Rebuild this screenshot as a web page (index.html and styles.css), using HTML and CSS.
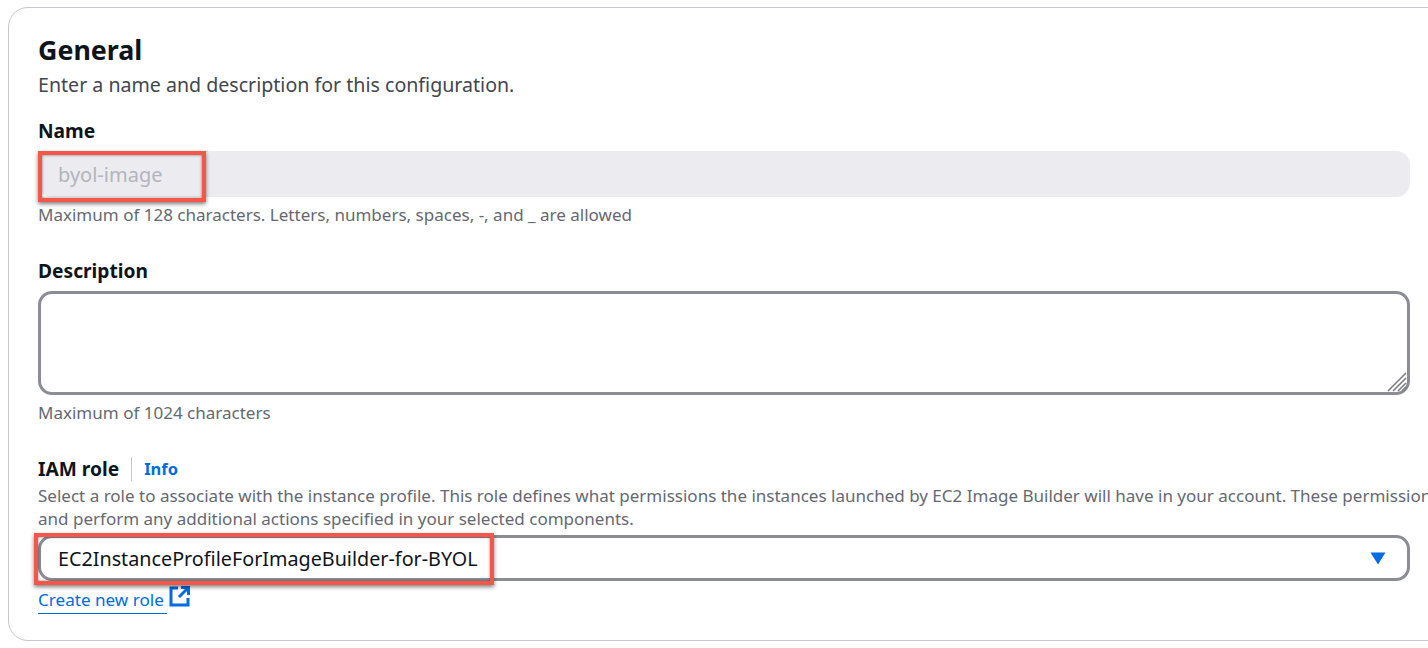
FILE: index.html
```html
<!DOCTYPE html>
<html>
<head>
	<title>General</title>
	<link rel="stylesheet" href="styles.css">
</head>
<body>
<div class="card">
	<h1>General</h1>
	<p class="lead">Enter a name and description for this configuration.</p>

	<div class="field field-name">
		<div class="label">Name</div>
		<div class="input disabled">byol-image</div>
		<div class="callout callout-name"></div>
		<div class="hint hint-name">Maximum of 128 characters. Letters, numbers, spaces, -, and _ are allowed</div>
	</div>

	<div class="field field-desc">
		<div class="label">Description</div>
		<div class="textarea">
			<svg class="grip" width="20" height="20" viewBox="0 0 20 20">
				<path d="M1 19 L19 1 M6 19 L19 6 M11 19 L19 11 M15 19 L19 15" stroke="#7d7d85" stroke-width="1.6" fill="none"/>
			</svg>
		</div>
		<div class="hint hint-desc">Maximum of 1024 characters</div>
	</div>

	<div class="field field-role">
		<div class="label-row">
			<span class="label">IAM role</span>
			<span class="info">Info</span>
		</div>
		<div class="hint hint-role">Select a role to associate with the instance profile. This role defines what permissions the instances launched by EC2 Image Builder will have in your account. These permissions<br>and perform any additional actions specified in your selected components.</div>
		<div class="input select">
			<span class="select-value">EC2InstanceProfileForImageBuilder-for-BYOL</span>
			<svg class="caret" width="16" height="13" viewBox="0 0 16 13">
				<path d="M0.5 0.5 H15.5 L8 12.5 Z" fill="#006ce0"/>
			</svg>
		</div>
		<div class="callout callout-role"></div>
		<a class="link">
			<span class="link-text">Create new role</span>
			<svg class="ext" width="22" height="22" viewBox="0 0 22 22">
				<path d="M9 3 H2 V20 H19 V13" stroke="#006ce0" stroke-width="3" fill="none"/>
				<path d="M10 12 L19 3 M12 2.5 H19.5 V10" stroke="#006ce0" stroke-width="3" fill="none"/>
			</svg>
		</a>
	</div>
</div>
</body>
</html>
```

FILE: styles.css
```css
html, body {
	margin: 0;
	height: 648px;
	overflow: hidden;
	background: #fff;
}

body {
	font-family: "Noto Sans", "Open Sans", sans-serif;
	color: #0f141a;
	padding: 7px 0 0 8px;
	box-sizing: border-box;
}

.card {
	box-sizing: border-box;
	width: 1460px;
	height: 634px;
	padding: 24px 0 0 29px;
	border: 1.5px solid #c6c6cd;
	border-radius: 20px;
}

h1 {
	margin: 0;
	font-size: 26.8px;
	line-height: 36px;
	font-weight: 700;
}

.lead {
	margin: 0;
	font-size: 19.6px;
	line-height: 33px;
	color: #424650;
}

.field {
	position: relative;
	width: 1371.5px;
}

.field-name {
	margin-top: 14px;
}

.field-desc {
	margin-top: 27px;
}

.field-role {
	margin-top: 27px;
}

.label {
	font-size: 19.2px;
	line-height: 32px;
	font-weight: 700;
}

.input {
	box-sizing: border-box;
	height: 46px;
	padding-left: 20px;
	border-radius: 14px;
	font-size: 20px;
	line-height: 46px;
}

.disabled {
	margin-top: 4px;
	padding-top: 1px;
	background: #ebebf0;
	color: #b4b4bb;
}

.textarea {
	position: relative;
	box-sizing: border-box;
	height: 104px;
	margin-top: 4px;
	border: 3px solid #8c8c94;
	border-radius: 14px;
}

.grip {
	position: absolute;
	right: 0;
	bottom: 0;
}

.hint {
	font-size: 17.03px;
	line-height: 27px;
	color: #656871;
	white-space: nowrap;
}

.hint-name {
	margin-top: 4px;
}

.hint-desc {
	margin-top: 4px;
}

.label-row {
	display: flex;
	align-items: center;
}

.info {
	margin-left: 12px;
	padding-left: 12px;
	border-left: 1px solid #c6c6cd;
	font-size: 16.5px;
	line-height: 24px;
	font-weight: 700;
	color: #006ce0;
}

.hint-role {
	margin-top: -1px;
	line-height: 23px;
}

.select {
	display: flex;
	align-items: center;
	justify-content: space-between;
	height: 46px;
	margin-top: 5px;
	padding-right: 21px;
	border: 3px solid #8c8c94;
	padding-left: 17px;
}

.select-value {
	padding-top: 1px;
	font-size: 19.75px;
}

.link {
	display: flex;
	align-items: flex-start;
	margin-top: 5px;
	color: #006ce0;
}

.link-text {
	padding-right: 3px;
	font-size: 17.1px;
	line-height: 27px;
	border-bottom: 1.5px solid #006ce0;
}

.ext {
	margin: -1px 0 0 2px;
}

/* red annotation boxes drawn on top of the screenshot */
.callout {
	position: absolute;
	box-sizing: border-box;
	border: 4px solid #f4574a;
	box-shadow: 0 2px 4px rgba(0, 0, 0, 0.5), inset 0 0 3px rgba(0, 0, 0, 0.5);
}

.callout-name {
	left: 0;
	top: 36px;
	width: 168px;
	height: 51px;
}

.callout-role {
	left: -4px;
	top: 80px;
	width: 460px;
	height: 52px;
}
```
